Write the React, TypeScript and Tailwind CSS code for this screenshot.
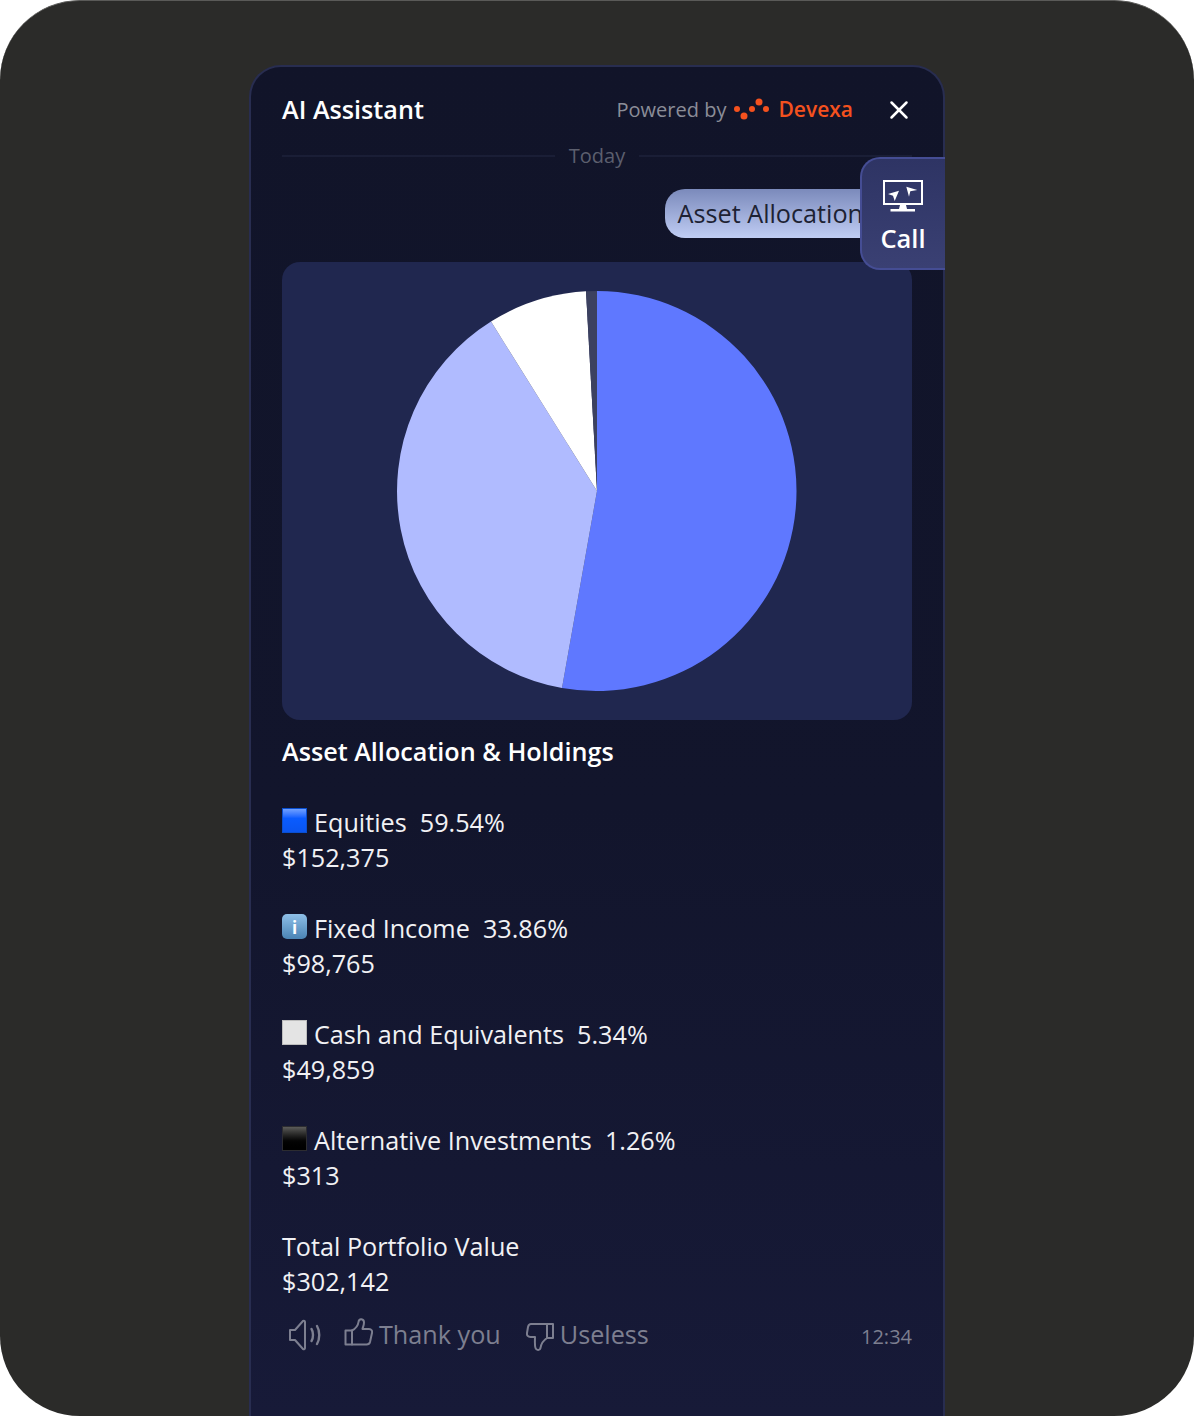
import { X } from 'lucide-react';

const holdings = [
  { name: 'Equities', pct: '59.54%', value: '$152,375', swatch: 'blue' },
  { name: 'Fixed Income', pct: '33.86%', value: '$98,765', swatch: 'info' },
  { name: 'Cash and Equivalents', pct: '5.34%', value: '$49,859', swatch: 'white' },
  { name: 'Alternative Investments', pct: '1.26%', value: '$313', swatch: 'black' },
];

function Swatch({ kind }: { kind: string }) {
  if (kind === 'blue') {
    return <span className="mb-1 h-[25px] w-[25px] shrink-0 border border-[#0a4fd0] bg-gradient-to-b from-[#6f9fff] via-[#0a5cff] via-40% to-[#0a55f0]" />;
  }
  if (kind === 'info') {
    return (
      <span className="mb-1 flex h-[25px] w-[25px] shrink-0 items-center justify-center rounded-[5px] bg-gradient-to-b from-[#8fc0e8] to-[#4a83b4] pt-px text-[17px] font-bold leading-none text-white">
        i
      </span>
    );
  }
  if (kind === 'white') {
    return <span className="mb-1 h-[25px] w-[25px] shrink-0 border border-[#bdbdbd] bg-[#e4e4e4]" />;
  }
  return <span className="mb-1 h-[25px] w-[25px] shrink-0 border border-[#2c2c30] bg-gradient-to-b from-[#5c5c5a] via-[#050505] via-60% to-black" />;
}

function Pie() {
  return (
    <svg width="400" height="400" viewBox="0 0 400 400">
      <path d="M200 200 L200 0 A200 200 0 1 1 165 397 Z" fill="#5f78ff" />
      <path d="M200 200 L165 397 A200 200 0 0 1 94 30.5 Z" fill="#b0bbff" />
      <path d="M200 200 L94 30.5 A200 200 0 0 1 189 0.3 Z" fill="#ffffff" />
      <path d="M200 200 L189 0.3 A200 200 0 0 1 200 0 Z" fill="#3c4160" />
    </svg>
  );
}

export default function App() {
  return (
    <div className="relative h-[1416px] w-[1194px] overflow-hidden rounded-[80px] border-t border-[#5a5a58] bg-[#2b2b29] pt-[64px] font-['Open_Sans',sans-serif]">
      <div className="relative mx-auto h-[1351px] w-[696px] rounded-t-[32px] border-2 border-b-0 border-[#282d50] bg-gradient-to-b from-[#111429] via-[#12152c] via-55% to-[#171a38] px-[31px] text-white">
        <header className="flex h-[75px] items-center justify-between pt-[11px]">
          <h1 className="text-[25.2px] font-semibold">AI Assistant</h1>
          <div className="flex items-center">
            <span className="text-[20px] text-[#8b8d98]">Powered by</span>
            <svg width="38" height="24" viewBox="0 0 38 24" className="ml-[7px]" fill="#f4511e">
              <circle cx="4" cy="11" r="3" />
              <circle cx="11" cy="18" r="3.5" />
              <circle cx="19" cy="11" r="3" />
              <circle cx="26" cy="4" r="3.5" />
              <circle cx="33" cy="11" r="3" />
            </svg>
            <span className="ml-[7px] text-[21px] font-semibold text-[#f4511e]">Devexa</span>
            <button className="ml-[31px] mr-[-2px] text-white">
              <X size={30} strokeWidth={2} />
            </button>
          </div>
        </header>

        <div className="flex items-center gap-[14px]">
          <div className="h-[2px] flex-1 bg-[#1a1e36]" />
          <span className="text-[20px] leading-[27px] text-[#5c5f6e]">Today</span>
          <div className="h-[2px] flex-1 bg-[#1a1e36]" />
        </div>

        <div className="mt-[20px] flex justify-end pr-[36px]">
          <div className="h-[49px] whitespace-nowrap rounded-l-[20px] bg-gradient-to-b from-[#7b8abb] to-[#c0cdf4] px-[13px] text-[25.2px] leading-[49px] text-[#1d2233]">
            Asset Allocation
          </div>
        </div>

        <div className="mt-[24px] flex h-[458px] items-start justify-center rounded-[18px] bg-[#20274f] pt-[29px]">
          <Pie />
        </div>

        <h2 className="mt-[14px] text-[25.2px] font-semibold leading-[35px]">Asset Allocation &amp; Holdings</h2>

        <div className="mt-[36px] flex flex-col gap-[36px] text-[25.2px] leading-[35px] text-[#f1f1f4]">
          {holdings.map((h) => (
            <div key={h.name}>
              <div className="flex items-center gap-[7px]">
                <Swatch kind={h.swatch} />
                <span className="whitespace-pre">{h.name}{'  '}{h.pct}</span>
              </div>
              <div>{h.value}</div>
            </div>
          ))}
          <div>
            <div>Total Portfolio Value</div>
            <div>$302,142</div>
          </div>
        </div>

        <div className="mt-[18px] flex items-center text-[25.2px] leading-[35px] text-[#7d7f90]">
          <svg width="34" height="32" viewBox="0 0 34 32" className="ml-[6px]" fill="none" stroke="currentColor" strokeWidth="2" strokeLinejoin="round" strokeLinecap="round">
            <path d="M2 11 H7 L15 2 C16 1.5 17 2 17 3 V29 C17 30 16 30.5 15 30 L7 21 H2 Z" />
            <path d="M23.5 10 C25.5 13 25.5 19 23.5 22" strokeWidth="2.4" />
            <path d="M29 7 C32 12 32 20 29 25" strokeWidth="2.4" />
          </svg>
          <span className="ml-[22px] flex items-center gap-[6px]">
            <svg width="29" height="30" viewBox="0 0 29 30" className="-translate-y-[3px]" fill="none" stroke="currentColor" strokeWidth="2" strokeLinejoin="round" strokeLinecap="round">
              <path d="M1.5 13.5 H8 V27.5 H1.5 Z" />
              <path d="M8 13.5 C11 12 14 9 14.5 5 C15 1 20 1.5 20 5.5 C20 8 19 10 18.5 12 H25 C27.5 12 28.5 14 28 16 L26 25 C25.5 27 24.5 27.5 22.5 27.5 H8" />
            </svg>
            Thank you
          </span>
          <span className="ml-[25px] flex items-center gap-[6px]">
            <svg width="28" height="30" viewBox="0 0 28 30" className="translate-y-[2px]" fill="none" stroke="currentColor" strokeWidth="2" strokeLinejoin="round" strokeLinecap="round">
              <path d="M21 2 H5 C3.5 2 2.5 3 2 5 L1 11 C0.7 13.5 2 15 4.5 15 H9 C9 19 8.5 23 9.5 26 C10.5 29 14 28.5 14.5 26 C15 22 16.5 19 21 16 Z" />
              <path d="M21 2 H27 V16 H21" />
            </svg>
            Useless
          </span>
          <span className="ml-auto translate-y-[2px] text-[20px]">12:34</span>
        </div>

        <div className="absolute right-[-2px] top-[90px] flex h-[113px] w-[85px] flex-col items-center rounded-l-[20px] border-2 border-r-0 border-[#454d94] bg-gradient-to-b from-[#2e3464] to-[#3a4073] pr-px pt-[21px]">
          <svg width="40" height="32" viewBox="0 0 40 32" fill="white" stroke="none">
            <path fillRule="evenodd" d="M0 0 H40 V25 H0 Z M2 2 V23 H38 V2 Z" />
            <path d="M5 14 L16 10.7 L11.7 21 L10 15.7 Z" />
            <path d="M23.3 6.7 L34.3 10 L27.3 11.3 L26 16.7 Z" />
            <path d="M17 25 H23 L24 29 H32 V31.5 H7.5 V29 H16 Z" />
          </svg>
          <span className="mt-[9px] text-[25.5px] font-semibold leading-[35px]">Call</span>
        </div>
      </div>
    </div>
  );
}
